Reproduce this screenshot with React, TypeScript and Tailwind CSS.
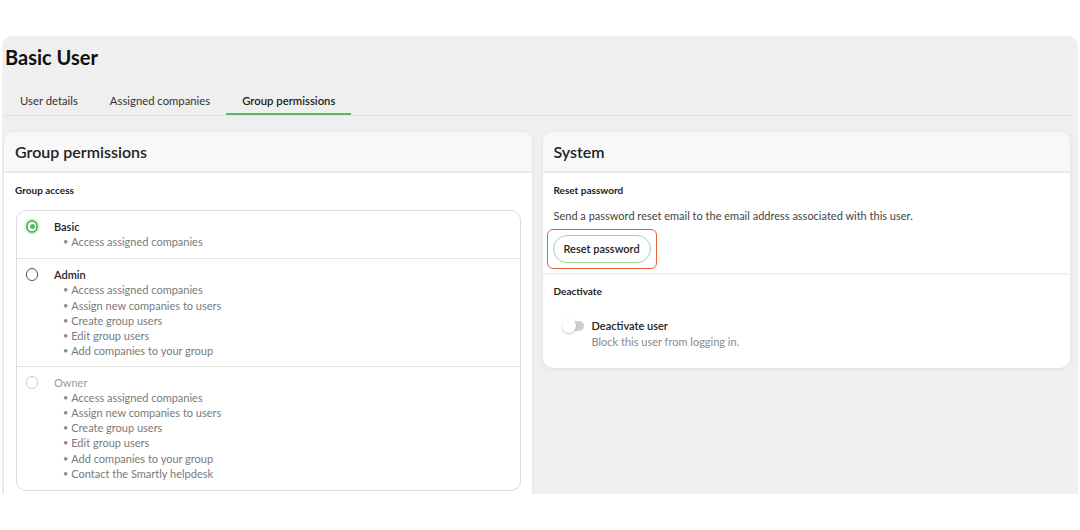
import React from "react";

const font = { fontFamily: "Lato, 'Open Sans', Arial, sans-serif" };

function Radio({ state }: { state: "checked" | "unchecked" | "disabled" }) {
  if (state === "checked") {
    return (
      <span className="flex h-[13px] w-[13px] items-center justify-center rounded-full border-[2px] border-[#5cb85c] shadow-[0_0_0_2px_rgba(92,184,92,0.18)]">
        <span className="h-[5px] w-[5px] rounded-full bg-[#5cb85c]" />
      </span>
    );
  }
  return (
    <span
      className={
        "block h-[13px] w-[13px] rounded-full border-[1.5px] " +
        (state === "disabled" ? "border-[#cfcfcf]" : "border-[#555555]")
      }
    />
  );
}

function Option({
  title,
  items,
  state,
  last,
  pt,
  pb,
}: {
  title: string;
  items: string[];
  state: "checked" | "unchecked" | "disabled";
  last?: boolean;
  pt: string;
  pb: string;
}) {
  const disabled = state === "disabled";
  return (
    <div className={"flex pl-[9px] " + pt + " " + pb + (last ? "" : " border-b border-[#e3e3e3]")}>
      <div className="flex h-[15px] w-[12px] items-center justify-center">
        <Radio state={state} />
      </div>
      <div className="ml-[16px]">
        <div
          className={
            "h-[15px] text-[11px] leading-[15px] " +
            (disabled ? "text-[#9a9a9a]" : "font-semibold text-[#222]")
          }
        >
          {title}
        </div>
        <ul>
          {items.map((it) => (
            <li key={it} className="flex h-[15.25px] items-center pl-[9px] text-[11px] leading-[15.25px] text-[#7a7a7a]">
              <span className="mr-[3px] text-[9px] text-[#888]">•</span>
              <span>{it}</span>
            </li>
          ))}
        </ul>
      </div>
    </div>
  );
}

export default function App() {
  return (
    <div style={font} className="h-[530px] w-[1080px] overflow-hidden bg-white pl-[2px] pr-[2px] pt-[36px]">
      <div className="h-[458px] overflow-hidden rounded-t-[10px] bg-[#efefef] pl-[2px] pr-[8px]">
        <h1 className="pl-[1px] pt-[7px] text-[20px] font-bold leading-[28px] text-[#111]">Basic User</h1>

        <div className="mr-[-2px] mt-[17px] flex h-[28px] border-b border-[#e2e2e2] text-[11.3px] text-[#333]">
          <div className="flex h-full items-center px-[16px]">User details</div>
          <div className="flex h-full items-center px-[16px]">Assigned companies</div>
          <div className="flex h-full items-center border-b-[2px] border-[#5cb85c] px-[16px] pt-[2px] font-semibold text-[#222]">
            Group permissions
          </div>
        </div>

        <div className="mt-[16px] grid grid-cols-2 gap-[11px]">
          {/* Left card */}
          <div className="rounded-[10px] bg-white shadow-[0_1px_4px_rgba(0,0,0,0.07)]">
            <div className="flex h-[41px] items-center rounded-t-[10px] border-b-[2px] border-[#ebebeb] bg-[#f8f8f8] px-[11px] text-[16px] font-semibold text-[#222]">
              Group permissions
            </div>
            <div className="px-[11px] pb-[20px] pt-[9px]">
              <div className="h-[16px] text-[10px] font-bold leading-[16px] text-[#222]">Group access</div>
              <div className="ml-[1px] mt-[12px] rounded-[10px] border border-[#dcdcdc]">
                <Option title="Basic" state="checked" items={["Access assigned companies"]} pt="pt-[8px]" pb="pb-[9px]" />
                <Option
                  title="Admin"
                  state="unchecked"
                  items={[
                    "Access assigned companies",
                    "Assign new companies to users",
                    "Create group users",
                    "Edit group users",
                    "Add companies to your group",
                  ]}
                  pt="pt-[8px]"
                  pb="pb-[7px]"
                />
                <Option
                  title="Owner"
                  state="disabled"
                  last
                  items={[
                    "Access assigned companies",
                    "Assign new companies to users",
                    "Create group users",
                    "Edit group users",
                    "Add companies to your group",
                    "Contact the Smartly helpdesk",
                  ]}
                  pt="pt-[8px]"
                  pb="pb-[9px]"
                />
              </div>
            </div>
          </div>

          {/* Right card */}
          <div className="self-start rounded-[10px] bg-white shadow-[0_1px_4px_rgba(0,0,0,0.07)]">
            <div className="flex h-[41px] items-center rounded-t-[10px] border-b-[2px] border-[#ebebeb] bg-[#f8f8f8] px-[11px] text-[16px] font-semibold text-[#222]">
              System
            </div>
            <div className="px-[11px] pb-[4px] pt-[9px]">
              <div className="h-[16px] text-[10px] font-bold leading-[16px] text-[#222]">Reset password</div>
              <div className="mt-[10px] h-[16px] text-[11px] leading-[16px] text-[#444]">
                Send a password reset email to the email address associated with this user.
              </div>
              <div className="ml-[-7px] mt-[5px] inline-block rounded-[6px] border border-[#e8603c] p-[5px]">
                <button className="h-[28px] rounded-full border border-[#9fd6a5] bg-white px-[10px] text-[11px] font-semibold text-[#222]">
                  Reset password
                </button>
              </div>
            </div>
            <div className="border-t-[2px] border-[#f0f0f0] px-[11px] pb-[18px] pt-[8px]">
              <div className="h-[16px] text-[10px] font-bold leading-[16px] text-[#222]">Deactivate</div>
              <div className="ml-[9px] mt-[19px] flex">
                <div className="flex h-[16px] items-center">
                  <div className="relative h-[10px] w-[21px] rounded-full bg-[#cfcfcf]">
                    <div className="absolute left-[-1px] top-[-2px] h-[14px] w-[14px] rounded-full bg-white shadow-[0_1px_2px_rgba(0,0,0,0.25)]" />
                  </div>
                </div>
                <div className="ml-[8px]">
                  <div className="h-[16px] text-[11px] font-semibold leading-[16px] text-[#222]">Deactivate user</div>
                  <div className="h-[16px] text-[11px] leading-[16px] text-[#8a8a8a]">Block this user from logging in.</div>
                </div>
              </div>
            </div>
          </div>
        </div>
      </div>
    </div>
  );
}
